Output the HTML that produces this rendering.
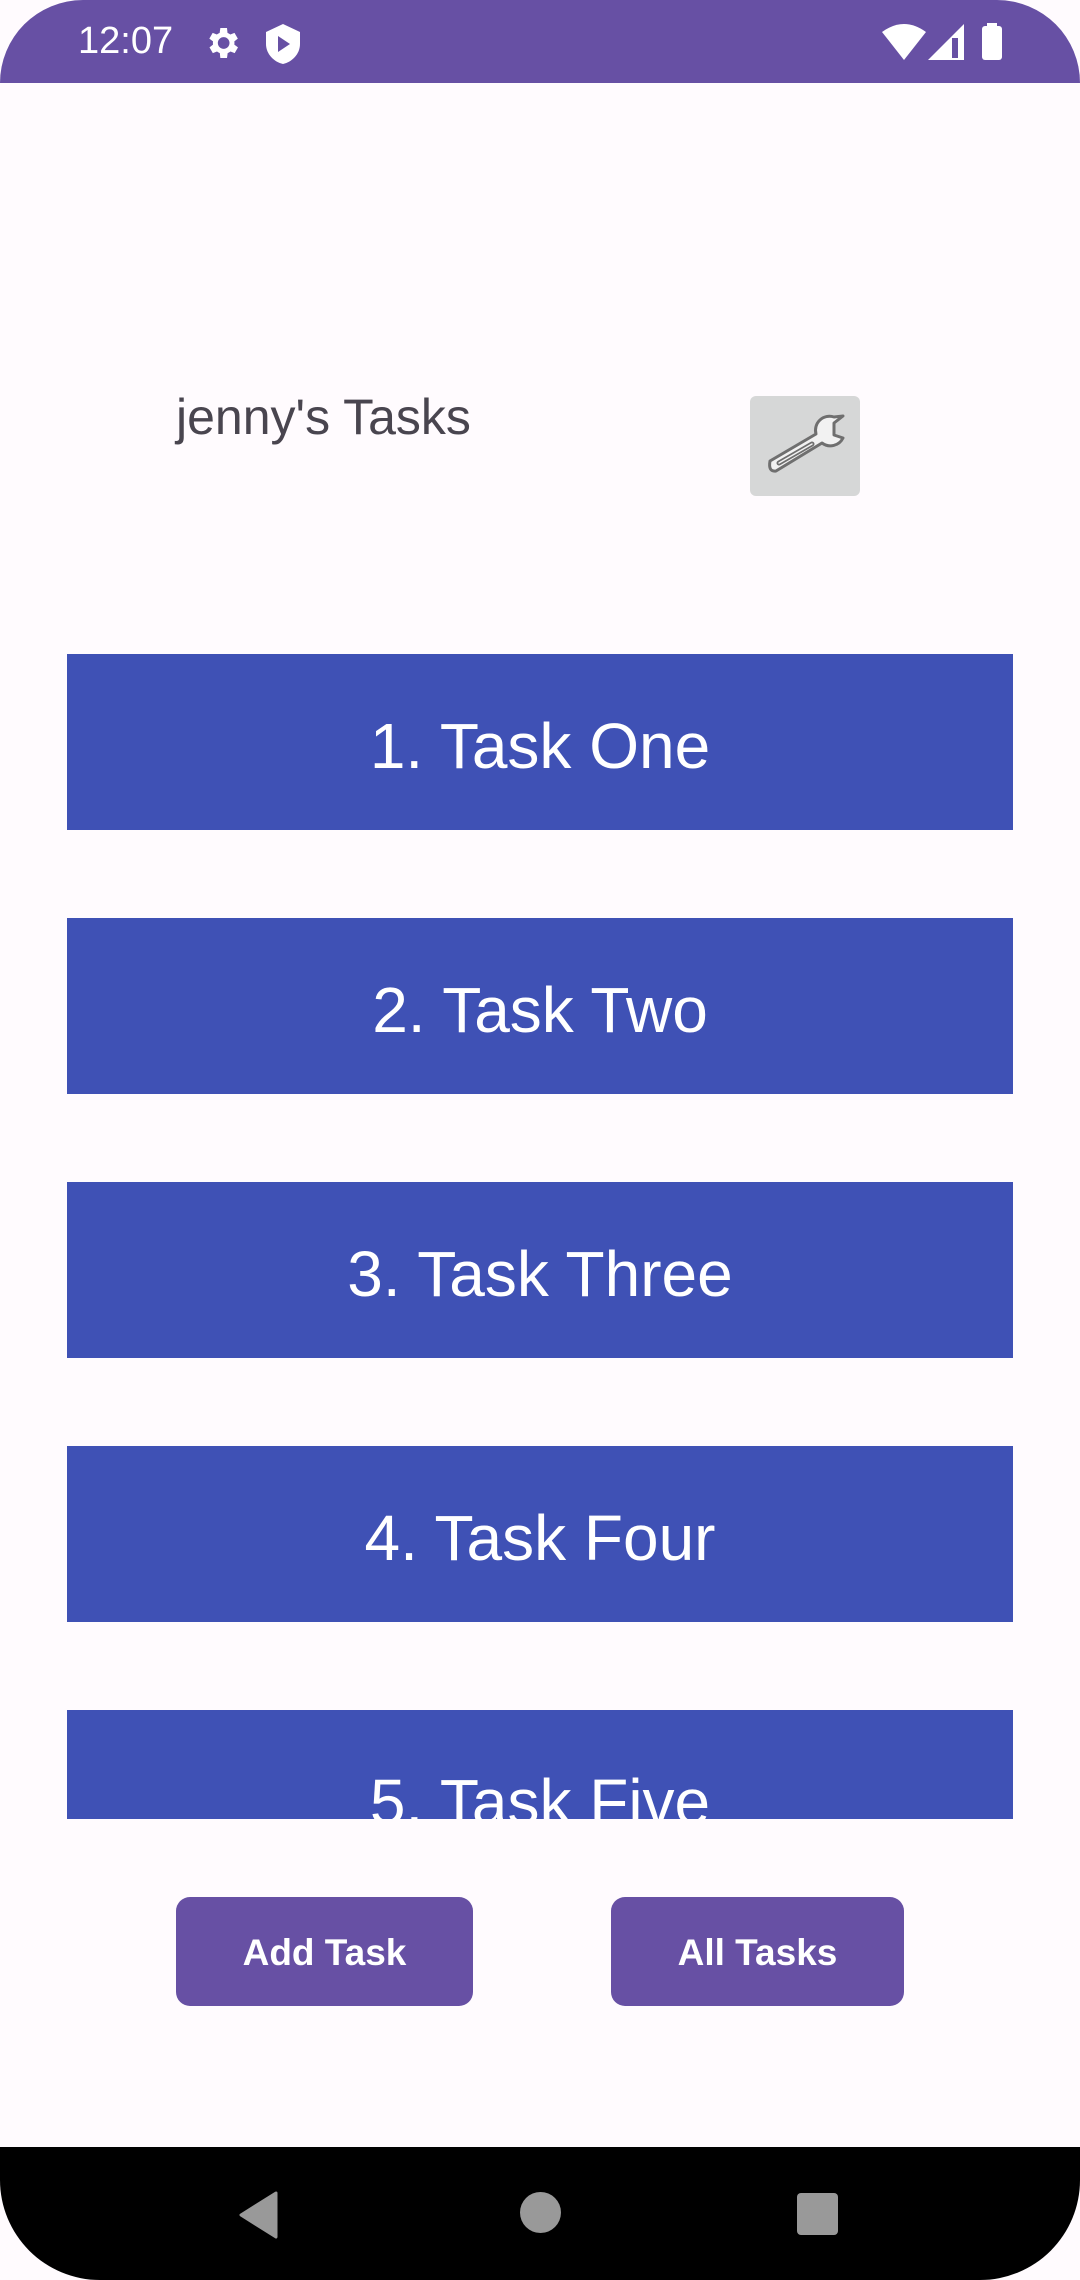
<!DOCTYPE html>
<html><head><style>
*{margin:0;padding:0;box-sizing:border-box}
body{width:1080px;height:2280px;background:#fffbfe;position:relative;overflow:hidden;font-family:"Liberation Sans",Roboto,sans-serif}
.sb{position:absolute;left:0;top:0;width:1080px;height:83px;background:#6750a4;border-radius:90px 90px 0 0;color:#fff}
.time{position:absolute;left:78px;top:20px;font-size:38px}
.title{position:absolute;left:176px;top:388px;font-size:50px;color:#49454f}
.wr{position:absolute;left:750px;top:396px;width:110px;height:100px;background:#d6d7d7;border-radius:6px}
.task{position:absolute;left:67px;width:946px;height:176px;background:#3f51b5;color:#fff;font-size:64px;text-align:center;line-height:184px}
.clip{position:absolute;left:0;top:0;width:1080px;height:1819px;overflow:hidden}
.btn{position:absolute;top:1897px;height:109px;background:#6750a4;color:#fff;border-radius:14px;font-size:37px;font-weight:bold;text-align:center;line-height:111px}
.nav{position:absolute;left:0;top:2147px;width:1080px;height:133px;background:#000;border-radius:0 0 100px 100px}
</style></head><body>
<div class="sb">
<div class="time">12:07</div>
<svg style="position:absolute;left:202px;top:23px" width="40" height="40" viewBox="0 0 24 24"><path fill="#fff" d="M19.4 13a7.5 7.5 0 000-2l2.1-1.6-2-3.5-2.5 1a7 7 0 00-1.7-1L15 3h-4l-.4 2.9a7 7 0 00-1.7 1l-2.5-1-2 3.5L6.6 11a7.5 7.5 0 000 2l-2.1 1.6 2 3.5 2.5-1a7 7 0 001.7 1L11 21h4l.4-2.9a7 7 0 001.7-1l2.5 1 2-3.5zM13 15.5a3.5 3.5 0 110-7 3.5 3.5 0 010 7z"/></svg>
<svg style="position:absolute;left:266px;top:24px" width="34" height="40" viewBox="0 0 17 20"><path fill="#fff" d="M8.5 0L17 4v6c0 5-4 9-8.5 10C4 19 0 15 0 10V4z"/><path fill="#6750a4" d="M6 6l6 4-6 4z"/></svg>
<svg style="position:absolute;left:882px;top:24px" width="44" height="36" viewBox="0 0 22 18"><path fill="#fff" d="M0 4Q11-4 22 4L11 18z"/></svg>
<svg style="position:absolute;left:928px;top:24px" width="36" height="36" viewBox="0 0 18 18"><path fill="#fff" d="M18 0V18H0z"/><path fill="#6750a4" d="M12 7h3v10h-3z"/></svg>
<div style="position:absolute;left:982px;top:26px;width:20px;height:34px;background:#fff;border-radius:3px"></div>
<div style="position:absolute;left:987px;top:23px;width:10px;height:5px;background:#fff"></div>
</div>
<div class="title">jenny's Tasks</div>
<div class="wr"><svg width="110" height="100" viewBox="0 0 110 100"><path d="M20 65L66 38A14 14 0 0 1 84 21L93 20L84 27L84 39L93 42A14 14 0 0 1 72 47L26 75Q18 76 20 65Z" fill="#f2f2f2" stroke="#6f6f6f" stroke-width="3" stroke-linejoin="round"/><path d="M29 67L62 48" stroke="#6f6f6f" stroke-width="5" stroke-linecap="round"/><path d="M29 67L62 48" stroke="#f2f2f2" stroke-width="1.5" stroke-linecap="round"/></svg></div>
<div class="clip">
<div class="task" style="top:654px">1. Task One</div>
<div class="task" style="top:918px">2. Task Two</div>
<div class="task" style="top:1182px">3. Task Three</div>
<div class="task" style="top:1446px">4. Task Four</div>
<div class="task" style="top:1710px">5. Task Five</div>
</div>
<div class="btn" style="left:176px;width:297px">Add Task</div>
<div class="btn" style="left:611px;width:293px">All Tasks</div>
<div class="nav">
<svg style="position:absolute;left:238px;top:44px" width="42" height="48" viewBox="0 0 42 48"><path d="M38 2L3 24L38 46Z" fill="#999" stroke="#999" stroke-width="3" stroke-linejoin="round"/></svg>
<div style="position:absolute;left:520px;top:45px;width:41px;height:41px;border-radius:50%;background:#999"></div>
<div style="position:absolute;left:797px;top:46px;width:41px;height:42px;border-radius:4px;background:#999"></div>
</div>
</body></html>
